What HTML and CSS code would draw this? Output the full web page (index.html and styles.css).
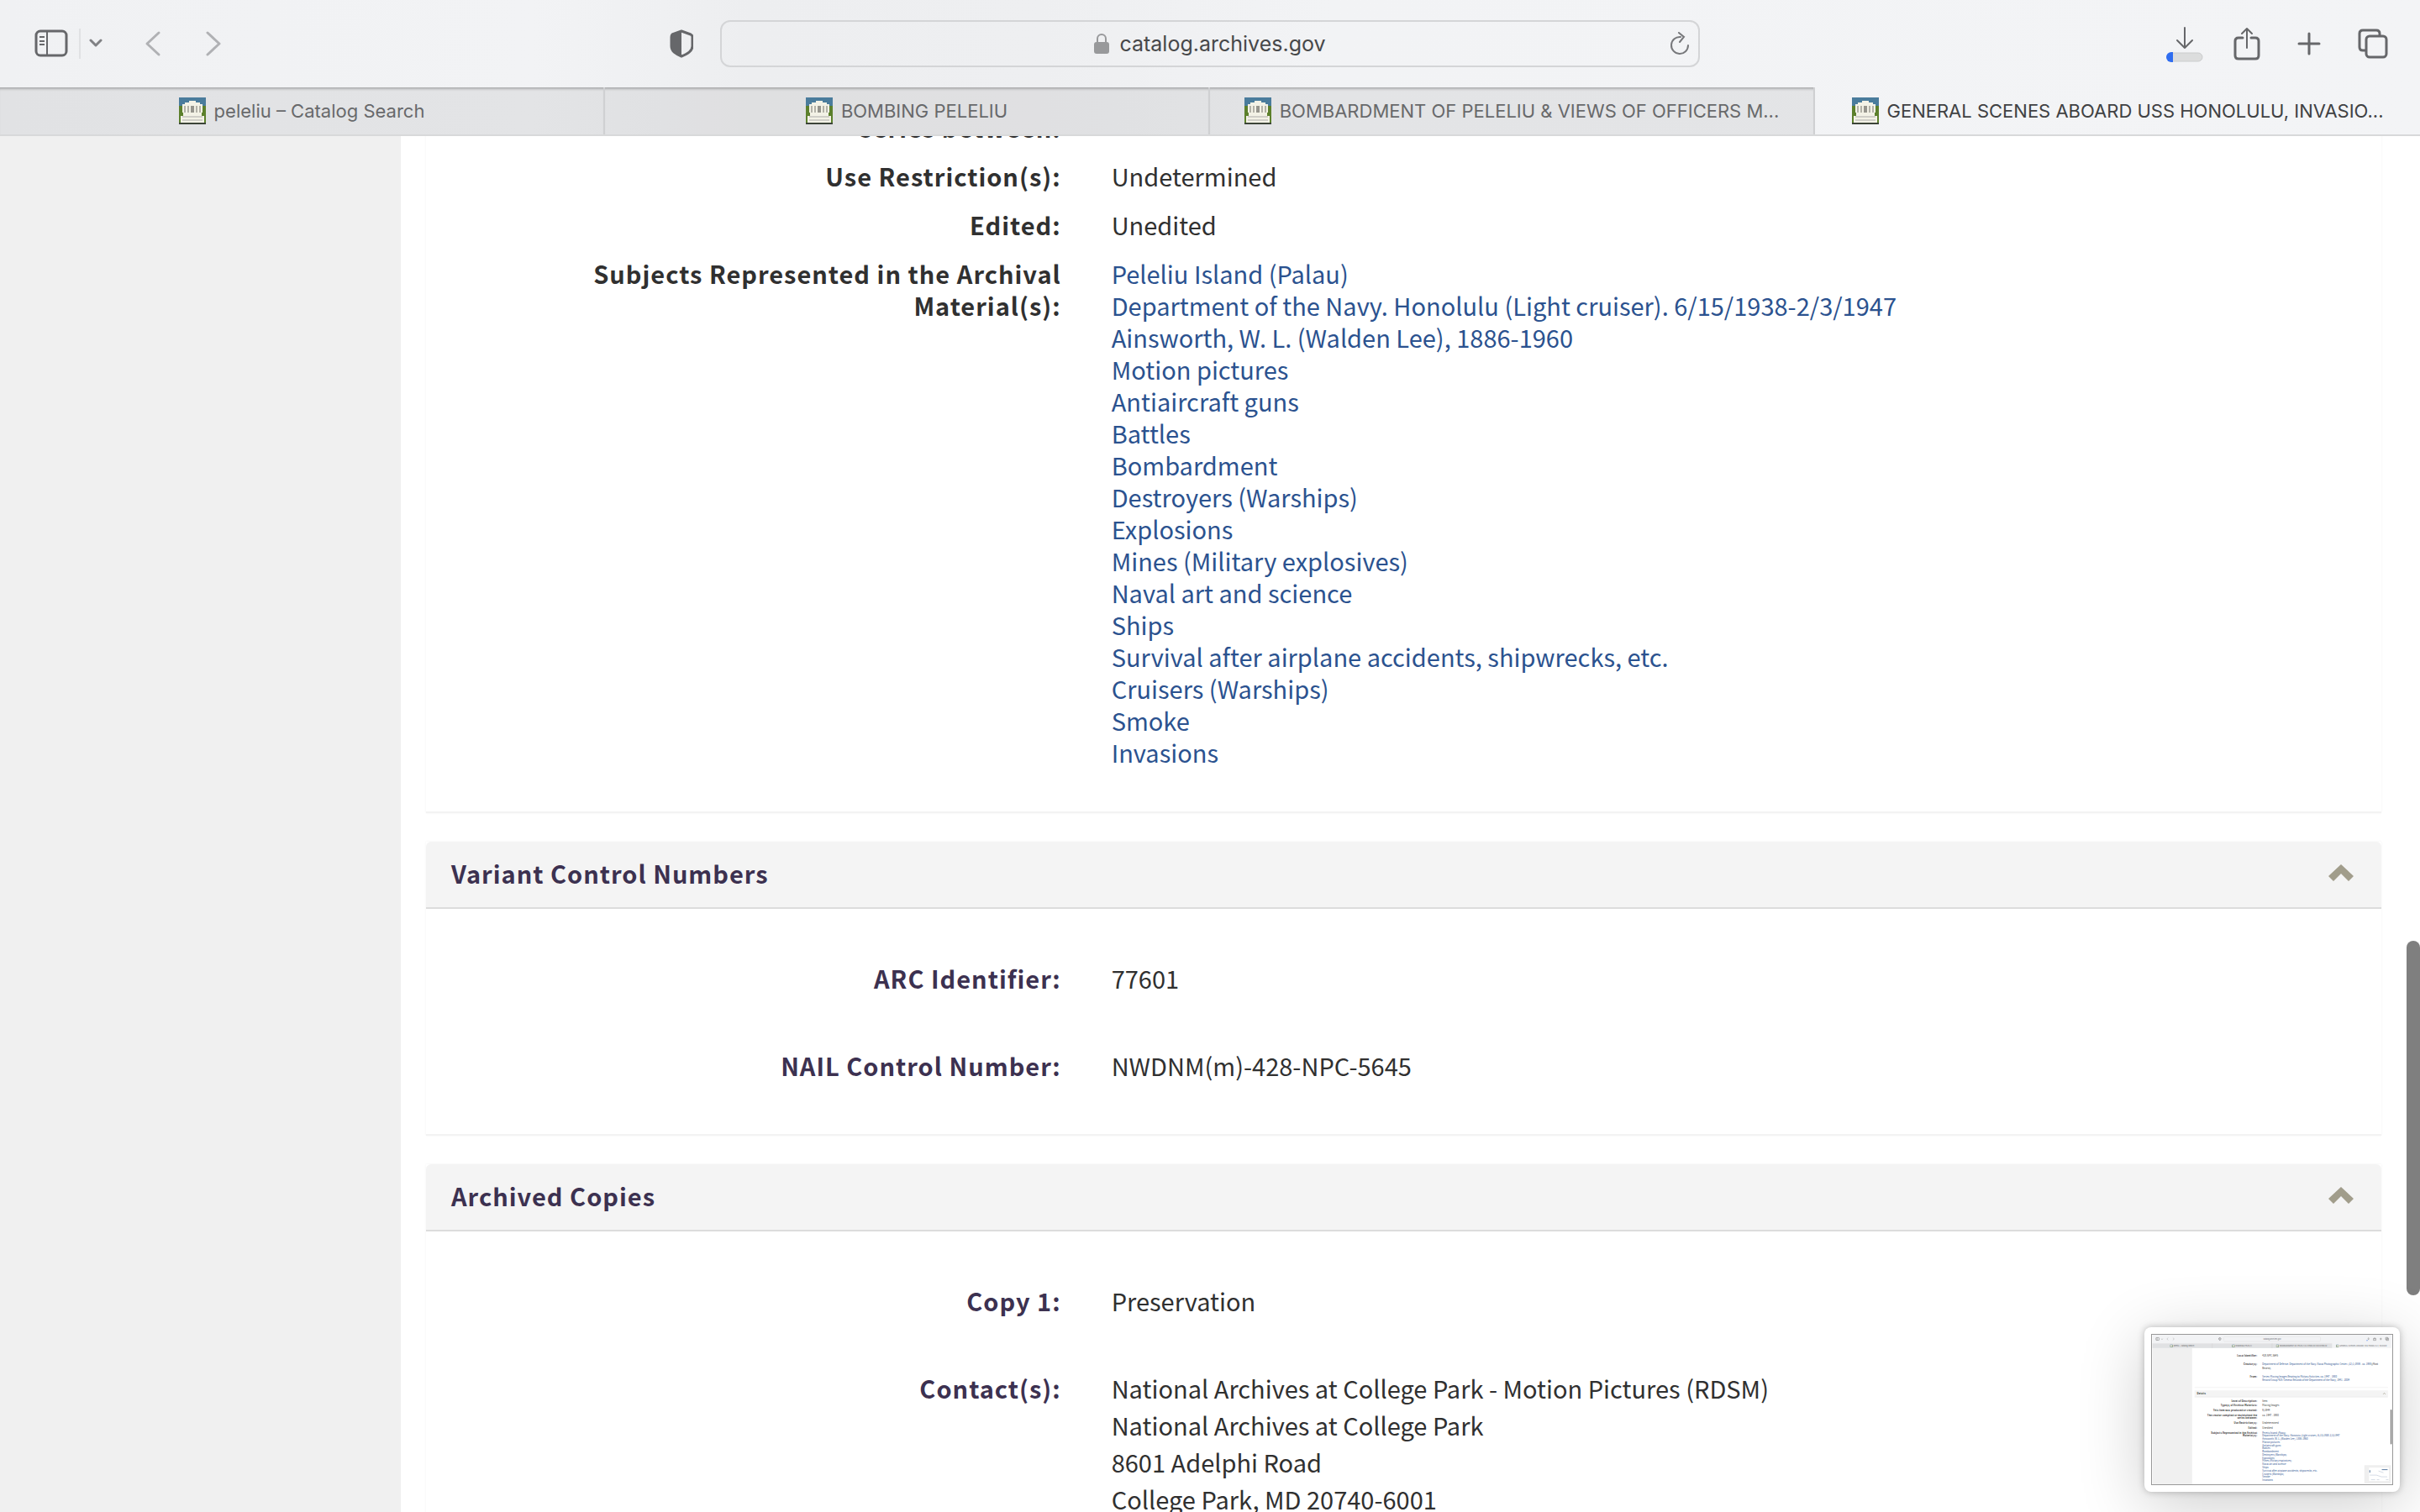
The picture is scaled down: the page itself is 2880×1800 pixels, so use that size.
FILE: index.html
```html
<!DOCTYPE html>
<html lang="en">
<head>
<meta charset="utf-8">
<title>GENERAL SCENES ABOARD USS HONOLULU, INVASION OF PELELIU</title>
<link rel="stylesheet" href="styles.css">
</head>
<body>
<svg class="defs" width="0" height="0" aria-hidden="true">
  <symbol id="favicon" viewBox="0 0 32 32">
    <rect width="32" height="32" fill="#4a7c9c"/>
    <rect y="10" width="32" height="20" fill="#5c802c"/>
    <rect y="30" width="32" height="2" fill="#3c4438"/>
    <path d="M12 4h8v2h5v2h3v10h-1v4h3v8H2v-8h3v-4H4V8h3V6h5z" fill="#f3f2e6"/>
    <path d="M7 10v8M11 10v8M21 10v8M25 10v8" stroke="#b3b2a8" stroke-width="2"/>
    <path d="M16 10v8" stroke="#96958d" stroke-width="4"/>
    <path d="M4 23h24M4 27h24" stroke="#d0cfc8" stroke-width="2"/>
  </symbol>
</svg>

<header class="browser">
  <div class="toolbar">
    <div class="tools tools-left">
      <button class="tool" aria-label="Show sidebar"><svg width="40" height="34" viewBox="0 0 40 34" fill="none" stroke="#66676a" stroke-width="2"><rect x="2" y="2" width="36" height="29" rx="5" stroke-width="3"/><path d="M15 2v29"/><path d="M6 9h6M6 14h6M6 18h6"/></svg></button>
      <span class="divider"></span>
      <button class="tool" aria-label="Sidebar options"><svg width="16" height="12" viewBox="0 0 16 12" fill="none" stroke="#808184" stroke-width="3" stroke-linecap="round" stroke-linejoin="round"><path d="M2 2l6 6 6-6"/></svg></button>
      <button class="tool tool-back" aria-label="Back"><svg width="20" height="32" viewBox="0 0 20 32" fill="none" stroke="#b0b1b4" stroke-width="3" stroke-linecap="round" stroke-linejoin="round"><path d="M17 3L3 16l14 13"/></svg></button>
      <button class="tool tool-forward" aria-label="Forward"><svg width="20" height="32" viewBox="0 0 20 32" fill="none" stroke="#b0b1b4" stroke-width="3" stroke-linecap="round" stroke-linejoin="round"><path d="M3 3l14 13L3 29"/></svg></button>
      <button class="tool tool-shield" aria-label="Privacy report"><svg width="28" height="34" viewBox="0 0 28 34"><path d="M14 2l11 4q2 1 2 3v11c0 6-6 9-13 12C7 29 2 26 2 20V9q0-2 1-3z" fill="none" stroke="#66676a" stroke-width="3" stroke-linejoin="round"/><path d="M14 2v30C7 29 2 26 2 20V9q0-2 1-3z" fill="#66676a"/></svg></button>
    </div>
    <div class="address">
      <div class="location">
        <svg width="18" height="26" viewBox="0 0 18 26"><rect y="11" width="18" height="14" rx="3" fill="#98999b"/><path d="M4 12V7a5 5 0 0 1 10 0v5" fill="none" stroke="#98999b" stroke-width="2"/></svg>
        <input class="url" type="text" aria-label="Address" value="catalog.archives.gov" size="17">
      </div>
      <button class="tool reload" aria-label="Reload"><svg width="24" height="28" viewBox="0 0 24 28" fill="none" stroke="#77787b" stroke-width="2" stroke-linecap="round"><path d="M13 6a10 10 0 1 0 9 10"/><path d="M11 1l6 5-5 6"/></svg></button>
    </div>
    <div class="tools tools-right">
      <button class="tool tool-downloads" aria-label="Downloads"><svg width="44" height="44" viewBox="0 0 44 44"><path d="M22 3v24M13 18l9 9 9-9" fill="none" stroke="#66676a" stroke-width="2" stroke-linecap="round" stroke-linejoin="round"/><rect x="1" y="33" width="42" height="10" rx="5" fill="#dcdddd" stroke="#cbcccd"/><path d="M8 32H6a6 6 0 0 0 0 12h2z" fill="#2f6df0"/></svg></button>
      <button class="tool" aria-label="Share"><svg width="32" height="40" viewBox="0 0 32 40" fill="none" stroke="#66676a" stroke-width="3" stroke-linecap="round" stroke-linejoin="round"><path d="M11 13H6q-4 0-4 4v17q0 4 4 4h20q4 0 4-4V17q0-4-4-4h-5"/><path d="M16 25V3M10 8l6-6 6 6" stroke-width="2"/></svg></button>
      <button class="tool" aria-label="New tab"><svg width="28" height="28" viewBox="0 0 28 28" stroke="#66676a" stroke-width="3" stroke-linecap="round"><path d="M14 2v24M2 14h24"/></svg></button>
      <button class="tool" aria-label="Tab overview"><svg width="36" height="36" viewBox="0 0 36 36" fill="none" stroke="#66676a" stroke-width="3"><path d="M9 26H6q-4 0-4-4V6q0-4 4-4h16q4 0 4 4v3"/><rect x="10" y="9" width="24" height="25" rx="4"/></svg></button>
    </div>
  </div>
  <nav class="tabs" aria-label="Tabs">
    <a class="tab" href="#"><svg width="32" height="32"><use href="#favicon"/></svg><span>peleliu – Catalog Search</span></a>
    <a class="tab" href="#"><svg width="32" height="32"><use href="#favicon"/></svg><span>BOMBING PELELIU</span></a>
    <a class="tab" href="#"><svg width="32" height="32"><use href="#favicon"/></svg><span>BOMBARDMENT OF PELELIU &amp; VIEWS OF OFFICERS M...</span></a>
    <a class="tab tab-active" href="#"><svg width="32" height="32"><use href="#favicon"/></svg><span>GENERAL SCENES ABOARD USS HONOLULU, INVASIO...</span></a>
  </nav>
</header>

<div class="viewport">
  <aside class="gutter"></aside>
  <main class="content">
    <section class="panel panel-details">
      <dl class="fields fields-tight">
        <dt>series between:</dt><dd></dd>
        <dt>Use Restriction(s):</dt><dd>Undetermined</dd>
        <dt>Edited:</dt><dd>Unedited</dd>
        <dt>Subjects Represented in the Archival Material(s):</dt>
        <dd>
          <ul class="subjects">
            <li><a href="#">Peleliu Island (Palau)</a></li>
            <li><a href="#">Department of the Navy. Honolulu (Light cruiser). 6/15/1938-2/3/1947</a></li>
            <li><a href="#">Ainsworth, W. L. (Walden Lee), 1886-1960</a></li>
            <li><a href="#">Motion pictures</a></li>
            <li><a href="#">Antiaircraft guns</a></li>
            <li><a href="#">Battles</a></li>
            <li><a href="#">Bombardment</a></li>
            <li><a href="#">Destroyers (Warships)</a></li>
            <li><a href="#">Explosions</a></li>
            <li><a href="#">Mines (Military explosives)</a></li>
            <li><a href="#">Naval art and science</a></li>
            <li><a href="#">Ships</a></li>
            <li><a href="#">Survival after airplane accidents, shipwrecks, etc.</a></li>
            <li><a href="#">Cruisers (Warships)</a></li>
            <li><a href="#">Smoke</a></li>
            <li><a href="#">Invasions</a></li>
          </ul>
        </dd>
      </dl>
    </section>

    <section class="panel">
      <h2 class="panel-title"><button class="panel-toggle" aria-expanded="true">Variant Control Numbers<svg width="30" height="20" viewBox="0 0 30 20" fill="#a19d8b"><path d="M15 0l15 14-6 6-9-9-9 9-6-6z"/></svg></button></h2>
      <dl class="fields">
        <dt>ARC Identifier:</dt><dd>77601</dd>
        <dt>NAIL Control Number:</dt><dd>NWDNM(m)-428-NPC-5645</dd>
      </dl>
    </section>

    <section class="panel">
      <h2 class="panel-title"><button class="panel-toggle" aria-expanded="true">Archived Copies<svg width="30" height="20" viewBox="0 0 30 20" fill="#a19d8b"><path d="M15 0l15 14-6 6-9-9-9 9-6-6z"/></svg></button></h2>
      <dl class="fields">
        <dt>Copy 1:</dt><dd>Preservation</dd>
        <dt>Contact(s):</dt>
        <dd>National Archives at College Park - Motion Pictures (RDSM)<br>National Archives at College Park<br>8601 Adelphi Road<br>College Park, MD 20740-6001</dd>
      </dl>
    </section>
  </main>
</div>

<div class="scrollbar"></div>

<div class="thumbnail">
  <svg class="shot" viewBox="0 0 2880 1800" role="img" aria-label="Screenshot preview">
    <rect width="2880" height="1800" fill="#fff"/>
    <rect y="160" width="477" height="1640" fill="#f0f0f0"/>
    <rect width="2880" height="160" fill="#f2f3f5"/>
    <rect y="104" width="2161" height="56" fill="#e0e1e3"/>
    <path d="M719 104v56M1439 104v56" stroke="#ccc" stroke-width="4"/>
    <rect x="857" y="24" width="1165" height="56" rx="12" fill="none" stroke="#ddd" stroke-width="4"/>
    <g fill="none" stroke="#777" stroke-width="5">
      <rect x="42" y="35" width="38" height="31" rx="5"/><path d="M56 35v31M108 48l7 8 7-8"/>
      <path d="M190 36l-16 14 16 15M245 36l16 14-16 15" stroke="#aaa"/>
      <path d="M811 35l13 6v15l-13 11-13-11V41zM811 35v32"/>
      <path d="M2600 33v24M2590 48l10 9 10-9M2659 45h30v22h-30zM2674 58V31M2734 50h27M2748 37v27M2806 33h26v26h-26zM2815 42h26v26h-26z"/>
      <path d="M2578 68h10" stroke="#2f6df0" stroke-width="12"/>
    </g>
    <use href="#favicon" x="212" y="117" width="32" height="32"/>
    <use href="#favicon" x="958" y="117" width="32" height="32"/>
    <use href="#favicon" x="1488" y="117" width="32" height="32"/>
    <use href="#favicon" x="2210" y="117" width="32" height="32"/>
    <g class="mini-ui">
      <text x="1334" y="62">catalog.archives.gov</text>
      <text x="254" y="141">peleliu – Catalog Search</text>
      <text x="1000" y="141">BOMBING PELELIU</text>
      <text x="1530" y="141">BOMBARDMENT OF PELELIU &amp; VIEWS OF OFFICERS M...</text>
      <text x="2252" y="141">GENERAL SCENES ABOARD USS HONOLULU, INVASIO...</text>
    </g>
    <rect x="507" y="670" width="2327" height="80" fill="#f4f4f4"/>
    <path d="M507 634h2327M507 750h2327" stroke="#e2e2e2" stroke-width="4"/>
    <path d="M2776 716l14-14 14 14" fill="none" stroke="#a19d8b" stroke-width="8"/>
    <text class="mini-label" x="536" y="720">Details</text>
    <g class="mini-label" text-anchor="end">
      <text x="1260" y="260">Local Identifier:</text>
      <text x="1260" y="366">Creator(s):</text>
      <text x="1260" y="512">From:</text>
      <text x="1260" y="804">Level of Description:</text>
      <text x="1260" y="862">Type(s) of Archival Materials:</text>
      <text x="1260" y="920">This item was produced or created:</text>
      <text x="1260" y="978">The creator compiled or maintained the</text>
      <text x="1260" y="1016">series between:</text>
      <text x="1260" y="1074">Use Restriction(s):</text>
      <text x="1260" y="1132">Edited:</text>
      <text x="1260" y="1190">Subjects Represented in the Archival</text>
      <text x="1260" y="1228">Material(s):</text>
    </g>
    <g class="mini-value">
      <text x="1322" y="260">428-NPC-5645</text>
      <text x="2640" y="366">(Most</text>
      <text x="1322" y="410">Recent)</text>
      <text x="1322" y="804">Item</text>
      <text x="1322" y="862">Moving Images</text>
      <text x="1322" y="920">9/1944</text>
      <text x="1322" y="978">ca. 1947 - 1980</text>
      <text x="1322" y="1074">Undetermined</text>
      <text x="1322" y="1132">Unedited</text>
    </g>
    <g class="mini-link">
      <text x="1322" y="366">Department of Defense. Department of the Navy. Naval Photographic Center. (12/1/1959 - ca. 1998)</text>
      <text x="1322" y="512">Series: Moving Images Relating to Military Activities, ca. 1947 - 1980</text>
      <text x="1322" y="556">Record Group 428: General Records of the Department of the Navy, 1941 - 2004</text>
      <text x="1322" y="1190">Peleliu Island (Palau)</text>
      <text x="1322" y="1228">Department of the Navy. Honolulu (Light cruiser). 6/15/1938-2/3/1947</text>
      <text x="1322" y="1266">Ainsworth, W. L. (Walden Lee), 1886-1960</text>
      <text x="1322" y="1304">Motion pictures</text>
      <text x="1322" y="1342">Antiaircraft guns</text>
      <text x="1322" y="1380">Battles</text>
      <text x="1322" y="1418">Bombardment</text>
      <text x="1322" y="1456">Destroyers (Warships)</text>
      <text x="1322" y="1494">Explosions</text>
      <text x="1322" y="1532">Mines (Military explosives)</text>
      <text x="1322" y="1570">Naval art and science</text>
      <text x="1322" y="1608">Ships</text>
      <text x="1322" y="1646">Survival after airplane accidents, shipwrecks, etc.</text>
      <text x="1322" y="1684">Cruisers (Warships)</text>
      <text x="1322" y="1722">Smoke</text>
      <text x="1322" y="1760">Invasions</text>
    </g>
    <rect x="2864" y="900" width="16" height="420" rx="8" fill="#7f7f7f"/>
    <rect x="2550" y="1570" width="320" height="220" fill="#efefef"/>
    <rect x="2606" y="1600" width="240" height="160" fill="#fff"/>
    <path d="M2760 1624h70M2616 1630v30" stroke="#55779f" stroke-width="10"/>
    <path d="M2616 1690h80l60 20h70M2720 1640l60 20M2630 1745h50M2700 1745h30M2810 1745h30" fill="none" stroke="#b9c4d2" stroke-width="6"/>
  </svg>
</div>
</body>
</html>
```

FILE: styles.css
```css
* {
  box-sizing: border-box;
}

body {
  margin: 0;
  height: 100vh;
  display: flex;
  flex-direction: column;
  overflow: hidden;
  position: relative;
  background: #fff;
  color: #303030;
  font-family: "Noto Sans CJK SC", "Noto Sans", sans-serif;
  font-size: 29px;
}

a {
  color: inherit;
  text-decoration: none;
}

button,
input {
  margin: 0;
  padding: 0;
  border: 0;
  background: none;
  color: inherit;
  font: inherit;
}

svg {
  display: block;
  flex: none;
}

.defs {
  position: absolute;
}

/* Browser chrome */

.browser {
  flex: none;
  position: relative;
  background: linear-gradient(90deg, #f0f1f3 0%, #f2f3f5 22%, #edeef0 31%, #eeeff1 43%, #f2f3f5 55%, #f3f4f6 100%);
  border-bottom: 2px solid #d8d9da;
  font-family: Inter, "Liberation Sans", sans-serif;
}

.toolbar {
  display: grid;
  grid-template-columns: 1fr 40.5% 1fr;
  align-items: center;
  height: 104px;
}

.tools {
  display: flex;
  align-items: center;
}

.tools-left {
  padding: 0 32px 0 41px;
}

.divider {
  width: 2px;
  height: 36px;
  margin: 0 10px 0 13px;
  background: #e0e1e3;
}

.tool-back {
  margin-left: 50px;
}

.tool-forward {
  margin-left: 52px;
}

.tool-shield {
  margin-left: auto;
}

.tools-right {
  justify-content: flex-end;
  gap: 44px;
  padding-right: 38px;
}

.tool-downloads {
  margin-right: -8px;
}

.address {
  display: grid;
  grid-template-columns: 1fr auto 1fr;
  align-items: center;
  height: 56px;
  padding: 0 10px;
  border: 2px solid #d4d5d7;
  border-radius: 12px;
}

.location {
  grid-column: 2;
  display: flex;
  align-items: center;
  gap: 12px;
}

.reload {
  justify-self: end;
}

.url {
  field-sizing: content;
  height: 36px;
  color: #47484a;
  font-size: 25px;
}

.tabs {
  display: grid;
  grid-template-columns: repeat(4, 1fr);
}

.tab {
  display: flex;
  align-items: center;
  justify-content: center;
  gap: 10px;
  height: 56px;
  border-right: 2px solid #cfd0d2;
  background: rgba(0, 0, 0, 0.06);
  box-shadow: inset 0 4px 3px -2px rgba(0, 0, 0, 0.25);
  color: #68696b;
  font-size: 22px;
  white-space: nowrap;
}

.tab-active {
  border-right: 0;
  background: none;
  box-shadow: none;
  color: #404143;
}

/* Catalog page */

.viewport {
  flex: 1;
  min-height: 0;
  display: grid;
  grid-template-columns: 477px 1fr;
  overflow: hidden;
}

.gutter {
  background: #f0f0f0;
}

.content {
  min-height: 0;
  padding: 0 46px 0 30px;
}

.panel {
  margin-bottom: 34px;
  border-bottom: 2px solid #f3f3f3;
  box-shadow: 0 0 2px rgba(0, 0, 0, 0.06);
}

.panel-details {
  margin-top: -30px;
}

.panel-title {
  margin: 0;
  font: inherit;
}

.panel-toggle {
  display: flex;
  align-items: center;
  justify-content: space-between;
  width: 100%;
  height: 80px;
  padding: 0 33px 4px 30px;
  border-bottom: 2px solid #dcdcdc;
  border-radius: 6px 6px 0 0;
  background: #f4f4f4;
  color: #3c3150;
  font-weight: 700;
  letter-spacing: 1px;
}

.fields {
  display: grid;
  grid-template-columns: minmax(0, 1fr) minmax(0, 2fr);
  gap: 60px;
  margin: 0;
  padding: 60px 0;
  line-height: 44px;
}

.fields dt {
  padding-left: 32px;
  color: #3c3150;
  font-weight: 700;
  letter-spacing: 1px;
  text-align: right;
}

.fields dd {
  margin: 0;
}

.fields-tight {
  row-gap: 20px;
  padding: 0 0 52px;
  line-height: 38px;
}

.fields-tight dt {
  padding-left: 60px;
  color: #303030;
}

.subjects {
  margin: 0;
  padding: 0;
  list-style: none;
  color: #2b528f;
}

/* Overlays */

.scrollbar {
  position: absolute;
  top: 1120px;
  right: 0;
  width: 16px;
  height: 422px;
  border-radius: 8px;
  background: #7f7f7f;
}

.thumbnail {
  position: absolute;
  right: 24px;
  bottom: 24px;
  padding: 8px;
  border-radius: 8px;
  background: #fff;
  box-shadow: 0 0 8px rgba(0, 0, 0, 0.25), 0 16px 80px rgba(0, 0, 0, 0.2);
}

.shot {
  width: 288px;
  height: 180px;
  border: 1px solid #999;
}

.mini-ui {
  fill: #68696b;
  font: 22px Inter, sans-serif;
}

.mini-label {
  fill: #303030;
  font-weight: 700;
  letter-spacing: 1px;
}

.mini-value {
  fill: #303030;
}

.mini-link {
  fill: #2b528f;
}
```
